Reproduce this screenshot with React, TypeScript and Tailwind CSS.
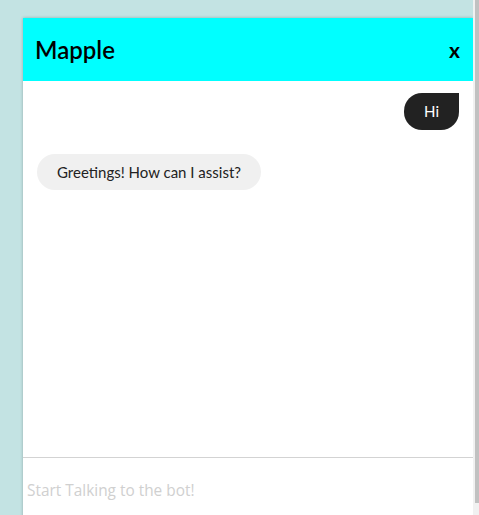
import React from "react";

export default function App() {
  return (
    <div className="flex h-[515px] w-[479px] overflow-hidden bg-[#c3e3e3]" style={{ fontFamily: "Lato, 'Noto Sans', sans-serif" }}>
      <div className="flex-1 pl-[23px] pt-[18px]">
        <div className="flex h-[520px] w-[450px] flex-col bg-white shadow-[0_0_3px_rgba(0,0,0,0.25)]">
          <div className="flex h-[63px] shrink-0 items-center justify-between bg-[#00ffff] pl-[12px] pr-[13px]">
            <span className="text-[24px] font-semibold leading-none text-black">Mapple</span>
            <span className="text-[21px] font-bold leading-none text-black">x</span>
          </div>
          <div className="flex h-[376px] shrink-0 flex-col px-[14px] pt-[12px]">
            <div className="flex justify-end">
              <div className="flex h-[37px] items-center rounded-[18px] rounded-tr-none bg-[#222222] px-[20px] text-[15px] text-white">
                Hi
              </div>
            </div>
            <div className="mt-[24px] flex justify-start">
              <div className="flex h-[36px] items-center rounded-[18px] bg-[#f0f0f0] px-[20px] text-[15px] text-[#222]">
                Greetings! How can I assist?
              </div>
            </div>
          </div>
          <div className="flex-1 border-t border-[#d3d3d3] pl-[4px]">
            <input
              className="h-[64px] w-full bg-transparent text-[15.4px] text-[#333] outline-none placeholder:text-[#d0d0d0]"
              placeholder="Start Talking to the bot!"
              style={{ fontFamily: "'Open Sans', sans-serif" }}
            />
          </div>
        </div>
      </div>
      <div className="flex w-[6px] flex-col bg-[#f1f1f1]">
        <div className="ml-[2px] h-[503px] w-[4px] bg-[#c1c1c1]" />
      </div>
    </div>
  );
}
